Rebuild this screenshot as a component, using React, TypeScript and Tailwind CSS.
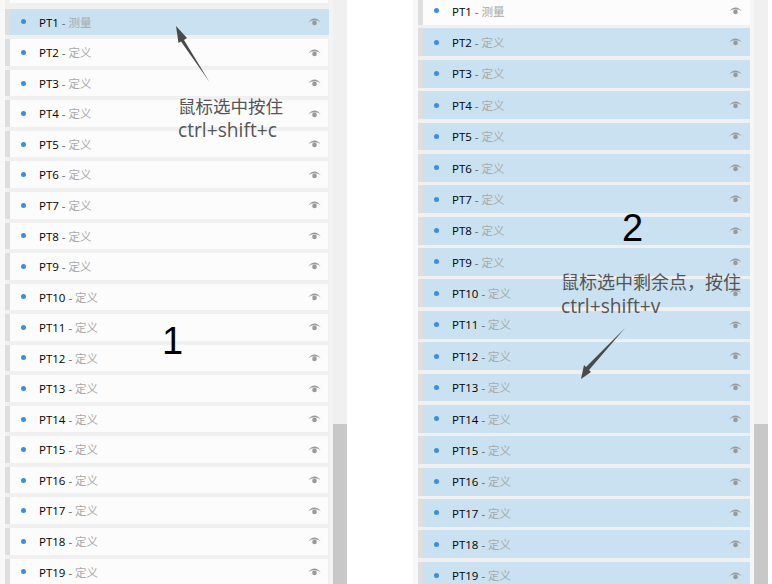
const FONT = "font-['Open_Sans','Noto_Sans_CJK_SC',sans-serif]";

function Eye() {
  return (
    <svg width="13" height="8" viewBox="0 0 13 8" className="shrink-0">
      <path d="M0.2 4.4C2 1.5 4.2 0.4 6.5 0.4S11 1.5 12.8 4.4C11 3 9.4 2.3 6.5 2.3S2 3 0.2 4.4Z" fill="#9a9a9a" />
      <circle cx="6.5" cy="4.9" r="2.3" fill="#9a9a9a" />
    </svg>
  );
}

function Row({
  n,
  label,
  selected,
  h,
  inset,
}: {
  n: number;
  label: string;
  selected: boolean;
  h: string;
  inset: boolean;
}) {
  return (
    <div
      className={`flex items-center shrink-0 border-l-[5px] border-[#dedede] ${h} ${
        inset ? "mr-px" : ""
      } ${selected ? "bg-[#c9e1f1]" : "bg-[#fcfcfc]"}`}
    >
      <span className="ml-[11px] w-[5px] h-[5px] rounded-full bg-[#3a8fdc] shrink-0" />
      <span className="ml-[13px] mt-px text-[11.5px] leading-none font-medium text-black whitespace-nowrap">
        PT{n}
        <span className="font-normal text-[#666]"> - </span>
        <span className="font-normal text-[#aaa]">{label}</span>
      </span>
      <span className={`ml-auto flex ${inset ? "mr-[7px]" : "mr-[8px]"}`}>
        <Eye />
      </span>
    </div>
  );
}

const nums = Array.from({ length: 19 }, (_, i) => i + 1);

function Scrollbar() {
  return (
    <div className="w-[14px] bg-[#f0f0f0] flex flex-col shrink-0">
      <div className="h-[424px]" />
      <div className="flex-1 bg-[#c8c8c8]" />
    </div>
  );
}

export default function App() {
  return (
    <div className={`relative w-[772px] h-[584px] overflow-hidden bg-white flex ${FONT}`}>
      {/* Left panel */}
      <div className="w-[347px] h-full flex bg-[#f8f8f8] pl-[5px] shrink-0">
        <div className="w-[324px] flex flex-col gap-[4px] overflow-hidden shrink-0 bg-[#f0f0f0]">
          <div className="h-[3px] shrink-0 bg-[#fcfcfc] ml-[5px] mr-px mb-[1.7px]" />
          {nums.map((n) => (
            <Row
              key={n}
              n={n}
              label={n === 1 ? "测量" : "定义"}
              selected={n === 1}
              inset={n !== 1}
              h="h-[26.56px]"
            />
          ))}
        </div>
        <div className="w-[4px] shrink-0 bg-[#f3f3f3]" />
        <Scrollbar />
      </div>

      <div className="w-[66px] shrink-0" />

      {/* Right panel */}
      <div className="w-[355px] h-full flex bg-[#f8f8f8] pl-[5px] shrink-0">
        <div className="w-[332px] flex flex-col overflow-hidden shrink-0 bg-[#f0f0f0]">
          <div className="-mt-[3px] flex flex-col gap-[3.5px]">
            {nums.map((n) => (
              <Row
                key={n}
                n={n}
                label={n === 1 ? "测量" : "定义"}
                selected={n !== 1}
                inset={false}
                h="h-[27.89px]"
              />
            ))}
          </div>
        </div>
        <div className="w-[4px] shrink-0 bg-[#f6f6f6]" />
        <Scrollbar />
      </div>

      {/* Annotations */}
      <svg className="absolute left-0 top-0 pointer-events-none" width="772" height="584">
        <polygon points="176,26 187,38 184,40 209.5,82 181,41.5 178.5,43" fill="#4a4a4a" />
        <polygon points="581,379 591,372 589,370 625,328 586,367 584,365" fill="#4a4a4a" />
      </svg>
      <div className="absolute left-[178px] top-[95px] text-[17.5px] leading-[23px] text-[#555] whitespace-nowrap">
        鼠标选中按住
        <br />
        <span className="text-[19.2px]">ctrl+shift+c</span>
      </div>
      <div className="absolute left-[561px] top-[271px] text-[18px] leading-[23px] text-[#555] whitespace-nowrap">
        鼠标选中剩余点，按住
        <br />
        <span className="text-[19.2px]">ctrl+shift+v</span>
      </div>
      <div className="absolute left-[162px] top-[320px] text-[38px] leading-[42px] text-black font-['Liberation_Sans',sans-serif]">
        1
      </div>
      <div className="absolute left-[622px] top-[207px] text-[38px] leading-[42px] text-black font-['Liberation_Sans',sans-serif]">
        2
      </div>
    </div>
  );
}
